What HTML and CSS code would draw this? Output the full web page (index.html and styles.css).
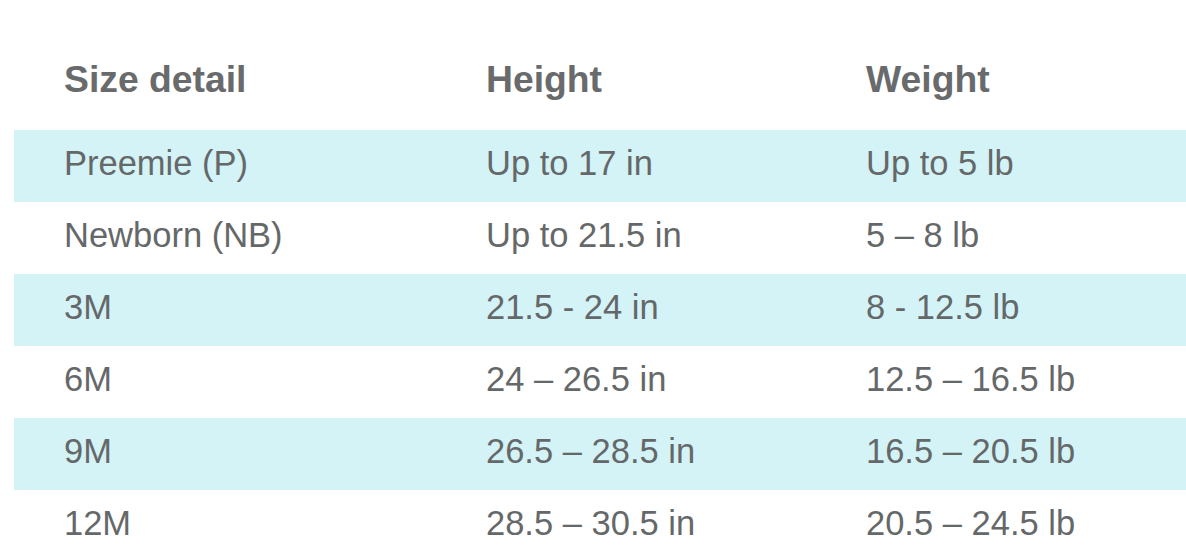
FILE: index.html
```html
<!DOCTYPE html>
<html>
<head>
<meta charset="utf-8">
<link rel="stylesheet" href="styles.css">
</head>
<body>
<div class="page">
  <div class="table">
    <div class="row head">
      <div class="cell">Size detail</div>
      <div class="cell">Height</div>
      <div class="cell">Weight</div>
    </div>
    <div class="row stripe">
      <div class="cell">Preemie (P)</div>
      <div class="cell">Up to 17 in</div>
      <div class="cell">Up to 5 lb</div>
    </div>
    <div class="row">
      <div class="cell">Newborn (NB)</div>
      <div class="cell">Up to 21.5 in</div>
      <div class="cell">5 – 8 lb</div>
    </div>
    <div class="row stripe">
      <div class="cell">3M</div>
      <div class="cell">21.5 - 24 in</div>
      <div class="cell">8 - 12.5 lb</div>
    </div>
    <div class="row">
      <div class="cell">6M</div>
      <div class="cell">24 – 26.5 in</div>
      <div class="cell">12.5 – 16.5 lb</div>
    </div>
    <div class="row stripe">
      <div class="cell">9M</div>
      <div class="cell">26.5 – 28.5 in</div>
      <div class="cell">16.5 – 20.5 lb</div>
    </div>
    <div class="row">
      <div class="cell">12M</div>
      <div class="cell">28.5 – 30.5 in</div>
      <div class="cell">20.5 – 24.5 lb</div>
    </div>
  </div>
</div>
</body>
</html>
```
FILE: styles.css
```css
html, body {
  margin: 0;
  padding: 0;
  background: #ffffff;
}
body {
  font-family: "Liberation Sans", Arial, Helvetica, sans-serif;
  color: #656869;
  overflow: hidden;
}
.page {
  width: 1186px;
  height: 559px;
  padding-left: 14px;
  box-sizing: border-box;
  overflow: hidden;
}
.table {
  display: flex;
  flex-direction: column;
}
.row {
  display: grid;
  grid-template-columns: 422px 380px 1fr;
  height: 72px;
  align-items: center;
}
.cell {
  padding-left: 50px;
  padding-bottom: 6px;
  font-size: 34.5px;
  line-height: 66px;
  white-space: nowrap;
}
.head {
  margin-top: 43px;
  margin-bottom: 15px;
}
.head .cell {
  padding-bottom: 0;
  line-height: 72px;
  font-weight: bold;
  font-size: 37.3px;
  color: #686a6b;
}
.stripe {
  background: #d4f3f7;
}
```
